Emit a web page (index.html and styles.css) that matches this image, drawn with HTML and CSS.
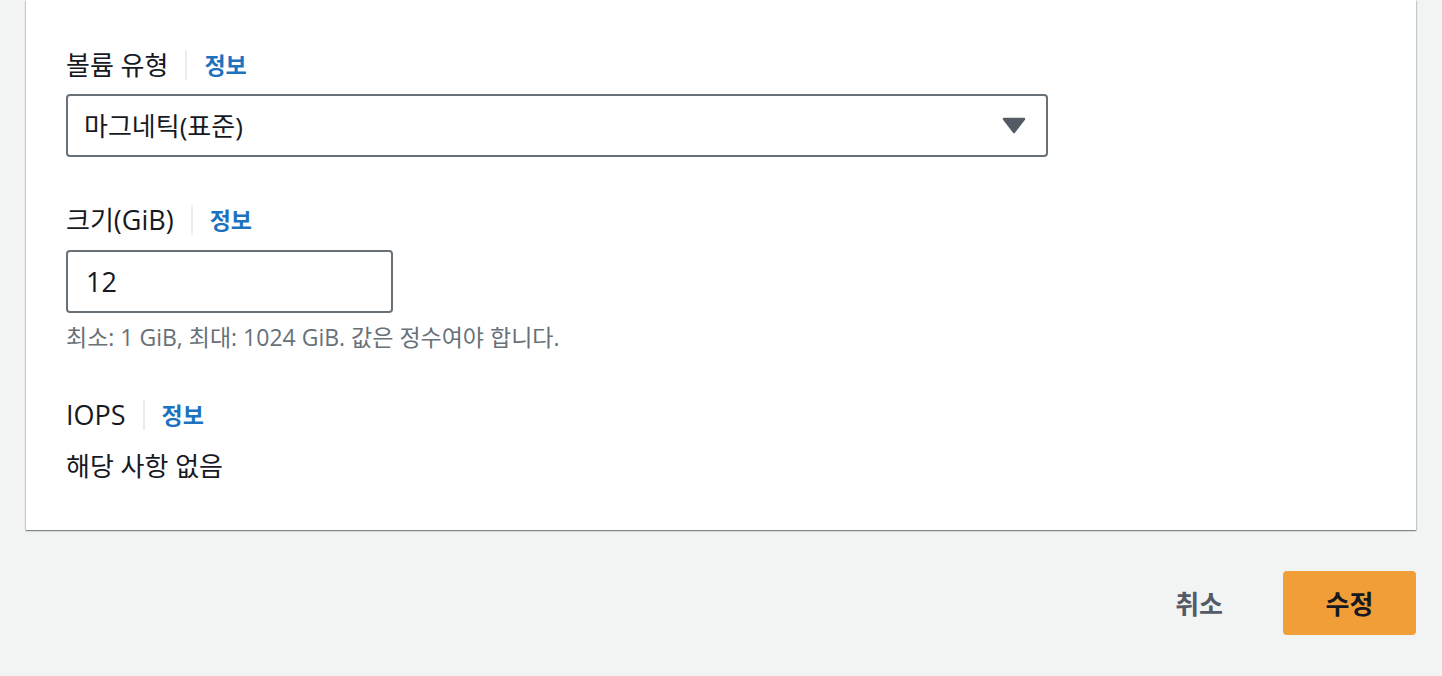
FILE: index.html
```html
<!DOCTYPE html>
<html lang="ko">
<head>
<meta charset="utf-8">
<title>볼륨 수정</title>
<link rel="stylesheet" href="styles.css">
</head>
<body>
<div class="page">
  <section class="card">
    <div class="field">
      <div class="label-row">
        <span class="label">볼륨 유형</span>
        <a class="info" href="#">정보</a>
      </div>
      <div class="select">
        <span class="select-value">마그네틱(표준)</span>
        <svg class="caret" width="24" height="17" viewBox="0 0 24 17" aria-hidden="true">
          <polygon points="2,2 22,2 12,15" fill="#545b64" stroke="#545b64" stroke-width="2.5" stroke-linejoin="round"/>
        </svg>
      </div>
    </div>

    <div class="field field-size">
      <div class="label-row">
        <span class="label">크기<span class="en">(GiB)</span></span>
        <a class="info" href="#">정보</a>
      </div>
      <div class="input"><span class="en">12</span></div>
      <p class="hint">최소: 1 GiB, 최대: 1024 GiB. 값은 정수여야 합니다.</p>
    </div>

    <div class="field field-iops">
      <div class="label-row">
        <span class="label en">IOPS</span>
        <a class="info" href="#">정보</a>
      </div>
      <p class="value">해당 사항 없음</p>
    </div>
  </section>

  <footer class="actions">
    <button class="btn-link" type="button">취소</button>
    <button class="btn-primary" type="button">수정</button>
  </footer>
</div>
</body>
</html>
```
FILE: styles.css
```css
* {
  box-sizing: border-box;
}

html, body {
  margin: 0;
  padding: 0;
}

body {
  background: #f2f3f3;
  color: #16191f;
  font-family: "Open Sans", "Noto Sans CJK KR", sans-serif;
  font-size: 26px;
}

.page {
  padding: 0 26px;
}

.card {
  background: #ffffff;
  padding: 50px 40px 49px;
  box-shadow: 0 1px 1px 0 rgba(0, 28, 36, 0.3),
              1px 1px 1px 0 rgba(0, 28, 36, 0.15),
              -1px 1px 1px 0 rgba(0, 28, 36, 0.15);
}

.field {
  display: flex;
  flex-direction: column;
  align-items: flex-start;
}

.field-size {
  margin-top: 48px;
}

.field-iops {
  margin-top: 49px;
}

.label-row {
  display: flex;
  align-items: center;
  height: 30px;
}

.label {
  font-size: 26px;
  line-height: 30px;
  padding-right: 17px;
  border-right: 2px solid #eaeded;
}

.en {
  font-size: 27px;
}

.info {
  font-size: 23px;
  font-weight: 700;
  color: #1d72bf;
  text-decoration: none;
  line-height: 30px;
  padding-left: 17px;
}

.select {
  margin-top: 14px;
  width: 982px;
  height: 63px;
  border: 2px solid #687078;
  border-radius: 4px;
  display: flex;
  align-items: center;
  justify-content: space-between;
  padding: 0 20px 0 16px;
}

.select-value {
  font-size: 26px;
  line-height: 30px;
}

.caret {
  display: block;
}

.input {
  margin-top: 15px;
  width: 327px;
  height: 63px;
  border: 2px solid #687078;
  border-radius: 4px;
  display: flex;
  align-items: center;
  padding: 0 18px;
  line-height: 30px;
}

.hint {
  margin: 10px 0 0;
  font-size: 23px;
  line-height: 28px;
  color: #687078;
}

.value {
  margin: 21px 0 0;
  font-size: 26px;
  line-height: 30px;
}

.actions {
  display: flex;
  justify-content: flex-end;
  align-items: center;
  gap: 40px;
  margin-top: 41px;
}

.btn-link {
  background: none;
  border: none;
  font-family: inherit;
  font-size: 26px;
  font-weight: 700;
  color: #545b64;
  padding: 0 20px;
  height: 64px;
}

.btn-primary {
  background: #f19e38;
  border: none;
  border-radius: 4px;
  font-family: inherit;
  font-size: 26px;
  font-weight: 700;
  color: #16191f;
  width: 133px;
  height: 64px;
}
```
